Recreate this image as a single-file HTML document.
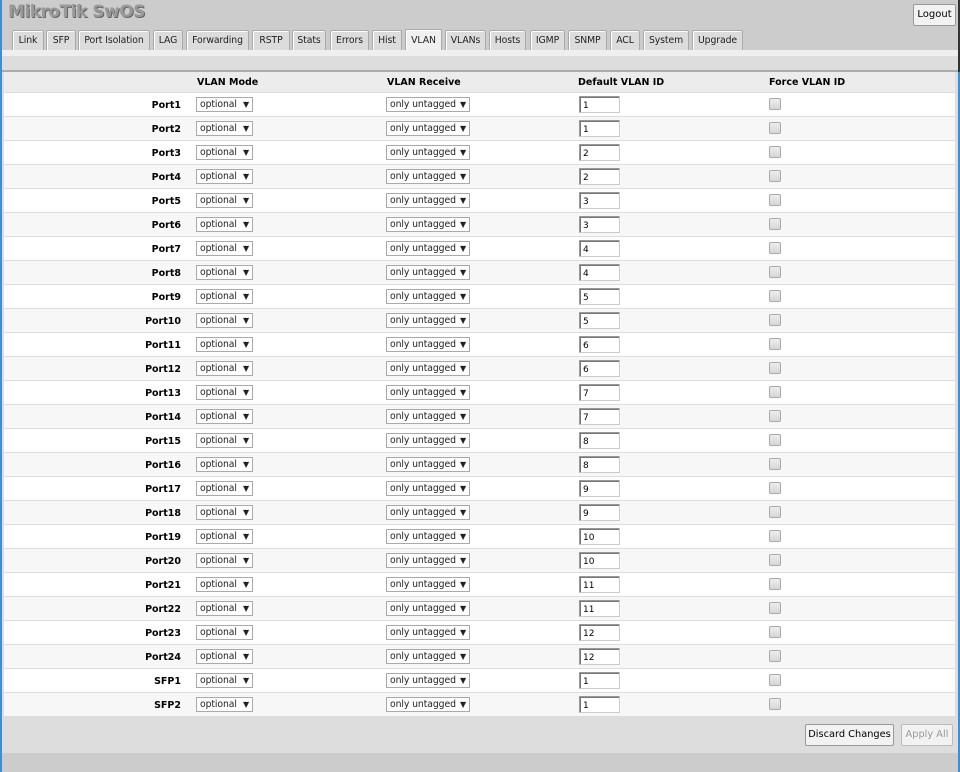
<!DOCTYPE html>
<html><head><meta charset="utf-8"><style>
*{margin:0;padding:0;box-sizing:border-box}
body{width:960px;height:772px;background:#cccccc;position:relative;overflow:hidden;font-family:"DejaVu Sans","Liberation Sans",sans-serif;font-size:9.5px;color:#000;white-space:nowrap}
.lb{position:absolute;left:0;top:0;width:2px;height:772px;background:#3b8fd9}
.rb{position:absolute;left:958px;top:0;width:2px;height:772px;background:#3b8fd9}
.rb2{position:absolute;left:958px;top:0;width:2px;height:72px;background:#333}
.title{position:absolute;left:8px;top:2px;font-family:"DejaVu Sans",sans-serif;font-weight:bold;font-size:17px;color:#999;text-shadow:1px 1px 0 #666;letter-spacing:-0.5px}
.logout{position:absolute;left:913px;top:4px;width:43px;height:22px;border:1px solid #999;border-radius:2px;background:#f2f2f2;font-size:10px;line-height:20px;text-align:center}
.tab{position:absolute;top:30px;height:20px;border:1px solid #aaa;border-bottom:none;border-radius:2px 2px 0 0;background:#dcdcdc;box-shadow:inset 1px 1px 0 #fff;font-size:9.3px;letter-spacing:-0.1px;line-height:19px;text-align:center;color:#222;overflow:hidden}
.tab.a{background:#f0f0f0;top:29px;height:21px;line-height:21px}
.band1{position:absolute;left:2px;top:50px;width:956px;height:6px;background:#efefef}
.band2{position:absolute;left:2px;top:56px;width:956px;height:14px;background:#dddddd}
.band3{position:absolute;left:2px;top:70px;width:956px;height:2px;background:#aaa}
.band4{position:absolute;left:2px;top:72px;width:956px;height:681px;background:#dddddd}
.hdr{position:absolute;left:4px;top:72px;width:951px;height:21px;background:#ececec;font-weight:bold;font-size:9.5px}
.hdr span{position:absolute;top:5px}
.row{position:absolute;left:4px;width:951px;height:24px;border-top:1px solid #ddd}
.row .l{position:absolute;right:774px;top:7px;font-weight:bold}
.sel{position:absolute;top:4px;height:15px;border:1px solid #aaa;background:#fff;font-size:9.3px;letter-spacing:-0.1px;line-height:14px;padding-left:3px;color:#222;overflow:hidden}
.sel i{position:absolute;right:3px;top:0;font-style:normal;font-size:8px;background:#fff;padding-left:2px}
.inp{position:absolute;left:575px;top:3px;width:41px;height:17px;border:1px solid #999;border-right-color:#ccc;border-bottom-color:#ccc;box-shadow:inset 1px 1px 0 #777;background:#fff;font-size:9px;line-height:18px;padding-left:3px}
.cb{position:absolute;left:765px;top:5px;width:12px;height:12px;border:1px solid #aaa;border-radius:2px;background:linear-gradient(#eee,#d6d6d6)}
.btn{position:absolute;top:724px;height:22px;border:1px solid #999;border-radius:2px;background:#f2f2f2;font-size:9.8px;line-height:20px;text-align:center}
</style></head><body>
<div class="band1"></div><div class="band2"></div><div class="band3"></div><div class="band4"></div>
<div class="lb"></div><div class="rb"></div><div class="rb2"></div>
<div class="title">MikroTik SwOS</div>
<div class="logout">Logout</div>
<div class="tab" style="left:12px;width:32px">Link</div>
<div class="tab" style="left:46px;width:30px">SFP</div>
<div class="tab" style="left:78px;width:72px">Port Isolation</div>
<div class="tab" style="left:153px;width:30px">LAG</div>
<div class="tab" style="left:186px;width:63px">Forwarding</div>
<div class="tab" style="left:252px;width:38px">RSTP</div>
<div class="tab" style="left:292px;width:34px">Stats</div>
<div class="tab" style="left:330px;width:39px">Errors</div>
<div class="tab" style="left:372px;width:30px">Hist</div>
<div class="tab a" style="left:405px;width:37px">VLAN</div>
<div class="tab" style="left:445px;width:41px">VLANs</div>
<div class="tab" style="left:489px;width:37px">Hosts</div>
<div class="tab" style="left:530px;width:35px">IGMP</div>
<div class="tab" style="left:568px;width:39px">SNMP</div>
<div class="tab" style="left:610px;width:30px">ACL</div>
<div class="tab" style="left:643px;width:46px">System</div>
<div class="tab" style="left:692px;width:51px">Upgrade</div>
<div class="hdr"><span style="left:193px">VLAN Mode</span><span style="left:383px">VLAN Receive</span><span style="left:574px">Default VLAN ID</span><span style="left:765px">Force VLAN ID</span></div>
<div id="rows"></div>
<script>
var ids=[1,1,2,2,3,3,4,4,5,5,6,6,7,7,8,8,9,9,10,10,11,11,12,12,1,1];
var h="";
for(var i=0;i<26;i++){
 var n=i<24?"Port"+(i+1):"SFP"+(i-23);
 h+='<div class="row" style="top:'+(92+24*i)+'px;background:'+(i%2?'#f7f7f7':'#fff')+'"><span class="l">'+n+'</span>'+
 '<div class="sel" style="left:192px;width:57px">optional<i>▼</i></div>'+
 '<div class="sel" style="left:382px;width:84px">only untagged<i>▼</i></div>'+
 '<div class="inp">'+ids[i]+'</div><div class="cb"></div></div>';
}
document.getElementById("rows").innerHTML=h;
</script>
<div class="btn" style="left:805px;width:89px">Discard Changes</div>
<div class="btn" style="left:901px;width:52px;color:#999;border-color:#bbb">Apply All</div>
</body></html>
